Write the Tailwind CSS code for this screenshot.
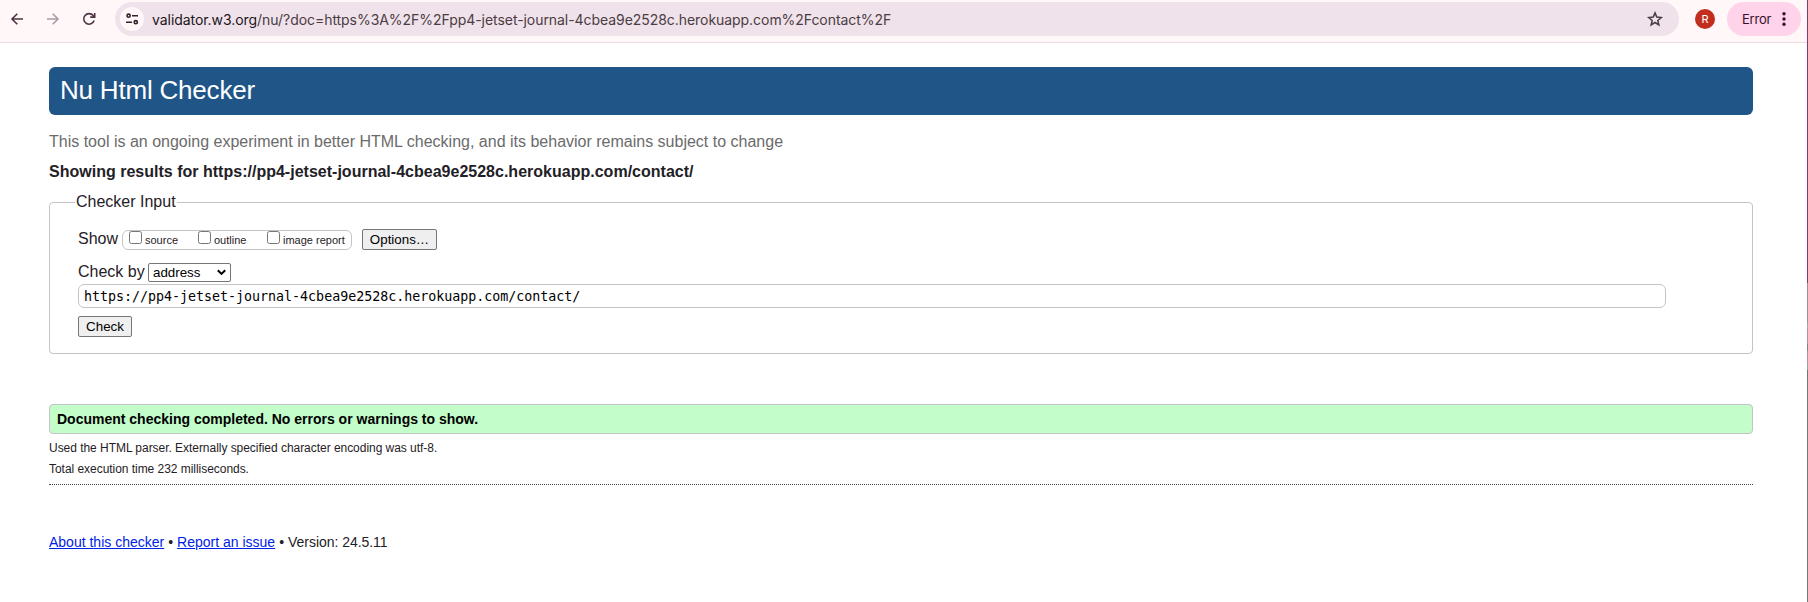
<!DOCTYPE html>
<html lang="en">
<head>
<meta charset="utf-8">
<title>Nu Html Checker</title>
<script src="https://cdn.jsdelivr.net/npm/@tailwindcss/browser@4"></script>
</head>
<body class="bg-white">
<div class="flex h-[602px] w-[1808px] overflow-hidden font-['Liberation_Sans',Arial,sans-serif] text-[#1f2126]">
  <div class="flex w-[1807px] flex-col">
    <!-- Browser toolbar -->
    <header class="flex h-[43px] shrink-0 items-start border-b border-[#efd9e1] bg-[#fff7f8] pt-[2px] font-[Inter,sans-serif]">
      <div class="flex h-[34px] w-[115px] shrink-0 items-center pl-[9px]">
        <svg class="h-4 w-4 shrink-0" viewBox="0 0 16 16" fill="none" stroke="#4d3340" stroke-width="1.6"><path d="M14 8H3.2M8.3 2.7L3 8l5.3 5.3"/></svg>
        <svg class="ml-5 h-4 w-4 shrink-0" viewBox="0 0 16 16" fill="none" stroke="#ab9ba2" stroke-width="1.6"><path d="M2 8h10.8M7.7 2.7L13 8l-5.3 5.3"/></svg>
        <svg class="ml-5 h-4 w-4 shrink-0" viewBox="0 0 16 16" fill="none" stroke="#4d3340" stroke-width="1.6"><path d="M13.1 9.5A5.3 5.3 0 1 1 12.2 4.6L13.6 6"/><path d="M13.7 1.9V6.1H9.2"/></svg>
      </div>
      <div class="flex h-[34px] w-[1564px] shrink-0 items-center rounded-full bg-[#f0e2ea] pl-[5px] pr-[15px]">
        <span class="flex h-6 w-6 shrink-0 items-center justify-center rounded-full bg-[#fff7f8]">
          <svg class="h-3.5 w-3.5" viewBox="0 0 14 14" fill="none" stroke="#30242a" stroke-width="1.6"><circle cx="3.6" cy="3.7" r="1.6"/><path d="M7 3.7h6M1 10.2h6"/><circle cx="10.8" cy="10.2" r="1.6"/></svg>
        </span>
        <span class="ml-2 grow whitespace-nowrap text-[14px] tracking-[-0.055px] text-[#4a3c43]"><span class="text-[#20161b]">validator.w3.org</span>/nu/?doc=https%3A%2F%2Fpp4-jetset-journal-4cbea9e2528c.herokuapp.com%2Fcontact%2F</span>
        <svg class="h-[18px] w-[18px] shrink-0" viewBox="0 0 18 18" fill="none" stroke="#493c43" stroke-width="1.5"><path d="M9 2.9l1.75 4.2 4.5.38-3.42 2.96 1.03 4.42L9 12.5l-3.86 2.36 1.03-4.42L2.75 7.48l4.5-.38z"/></svg>
      </div>
      <div class="ml-4 mt-[7px] flex h-5 w-5 items-center justify-center rounded-full bg-[#c22e1e] text-[11px] text-white">R</div>
      <div class="ml-3 flex h-[34px] w-[74px] items-center rounded-full bg-[#ffd3e9] pl-[15px] text-[13px] text-[#37102a]">
        <span class="w-[30px] pt-px tracking-[-0.2px]">Error</span>
        <svg class="ml-[10px] h-4 w-1 shrink-0" viewBox="0 0 4 16" fill="#37102a"><circle cx="2" cy="2.7" r="1.7"/><circle cx="2" cy="8" r="1.7"/><circle cx="2" cy="13.3" r="1.7"/></svg>
      </div>
    </header>

    <main class="flex flex-col pl-[49px] pr-[54px] pt-6">
      <h1 class="flex h-12 items-center rounded-md bg-[#205687] pb-px pl-[11px] text-[26px] tracking-[-0.2px] text-white">Nu Html Checker</h1>
      <p class="mt-[15px] h-6 text-[16px] leading-6 text-[#6b6b6b]">This tool is an ongoing experiment in better HTML checking, and its behavior remains subject to change</p>
      <h2 class="mt-[6px] h-6 text-[16px] font-bold leading-6 tracking-[0.01px]">Showing results for https://pp4-jetset-journal-4cbea9e2528c.herokuapp.com/contact/</h2>

      <fieldset class="mt-[9px] h-[161px] rounded-[4px] border border-[#c4c4c4] pl-[28px]">
        <legend class="-ml-[3px] h-[19px] px-px text-[16px] leading-[17px]">Checker Input</legend>
        <div class="mt-[17px] flex h-[21px] items-center text-[16px]">
          <span class="w-11 pb-0.5 leading-5">Show</span>
          <div class="flex h-5 w-[230px] rounded-md border border-[#c4c4c4] pl-[6px] text-[11px] leading-[18px]">
            <label class="flex w-[69px]"><span class="mr-[3px] h-[13px] w-[13px] shrink-0 rounded-[2.5px] border border-[#767676] bg-white"></span><span class="whitespace-nowrap">source</span></label>
            <label class="flex w-[69px]"><span class="mr-[3px] h-[13px] w-[13px] shrink-0 rounded-[2.5px] border border-[#767676] bg-white"></span><span class="whitespace-nowrap">outline</span></label>
            <label class="flex"><span class="mr-[3px] h-[13px] w-[13px] shrink-0 rounded-[2.5px] border border-[#767676] bg-white"></span><span class="whitespace-nowrap">image report</span></label>
          </div>
          <button class="ml-[10px] h-[21px] w-[75px] rounded-[2px] border border-[#767676] bg-[#efefef] text-[13.33px] leading-[19px] text-black">Options…</button>
        </div>
        <div class="mt-[12px] flex h-[21px] items-center text-[16px]">
          <span class="w-[70px] whitespace-nowrap pb-0.5 leading-5">Check by</span>
          <div class="flex h-[19px] w-[83px] items-center justify-between rounded-[2px] border border-[#767676] bg-white pl-1 pr-1 text-[13.33px] leading-[17px] text-black"><span>address</span><svg class="h-[7px] w-[9px]" viewBox="0 0 9 7" fill="none" stroke="#000" stroke-width="2"><path d="M.8 1.2L4.5 4.9 8.2 1.2"/></svg></div>
        </div>
        <div class="mt-px flex h-6 w-[1588px] items-center rounded-md border border-[#c4c4c4] pl-[5px] pt-px font-['DejaVu_Sans_Mono',monospace] text-[13.33px] tracking-[-0.02px] text-black">https://pp4-jetset-journal-4cbea9e2528c.herokuapp.com/contact/</div>
        <button class="mt-2 block h-[21px] w-[54px] rounded-[2px] border border-[#767676] bg-[#efefef] text-[13.33px] leading-[19px] text-black">Check</button>
      </fieldset>

      <p class="mt-[50px] flex h-[30px] items-center rounded-[4px] border border-[#c4c4c4] bg-[#c2fdca] pl-[7px] text-[14px] font-bold text-black">Document checking completed. No errors or warnings to show.</p>
      <p class="mt-[4px] h-5 text-[12px] leading-5 tracking-[-0.04px]">Used the HTML parser. Externally specified character encoding was utf-8.</p>
      <p class="mt-px h-[26px] border-b border-dotted border-[#444] text-[12px] leading-5 tracking-[-0.04px]">Total execution time 232 milliseconds.</p>
      <footer class="mt-[47px] flex h-5 gap-1 text-[14px] leading-5"><a class="text-[#0022e6] underline">About this checker</a><span>•</span><a class="text-[#0022e6] underline">Report an issue</a><span>•</span><span class="tracking-[-0.04px]">Version: 24.5.11</span></footer>
    </main>
  </div>
  <!-- Sliver of the desktop behind the window -->
  <div class="flex w-px flex-col bg-[#777477]"><span class="h-[283px] bg-[#853b66]"></span><span class="h-10 bg-[#ac8794]"></span><span class="h-[6px] bg-[#a9a4a7]"></span><span class="h-[15px] bg-[#bd8b9b]"></span><span class="h-[7px] bg-[#8b7d84]"></span><span class="h-3 bg-[#bd8b9b]"></span><span class="h-[7px] bg-[#a09fa0]"></span></div>
</div>
</body>
</html>
